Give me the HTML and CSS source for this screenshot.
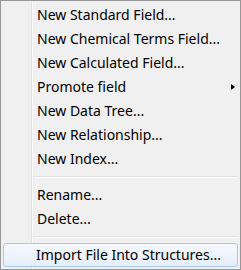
FILE: index.html
```html
<!DOCTYPE html>
<html>
<head>
<meta charset="utf-8">
<link rel="stylesheet" href="styles.css">
</head>
<body>
<div class="menu">
  <div class="item">New Standard Field...</div>
  <div class="item">New Chemical Terms Field...</div>
  <div class="item">New Calculated Field...</div>
  <div class="item has-sub">Promote field<span class="arrow"></span></div>
  <div class="item">New Data Tree...</div>
  <div class="item">New Relationship...</div>
  <div class="item">New Index...</div>
  <div class="sep"></div>
  <div class="item">Rename...</div>
  <div class="item">Delete...</div>
  <div class="sep"></div>
  <div class="item hover">Import File Into Structures...</div>
</div>
</body>
</html>
```
FILE: styles.css
```css
html, body {
  margin: 0;
  padding: 0;
  background: #f0f0f0;
}
.menu {
  box-sizing: border-box;
  width: 241px;
  height: 270px;
  border: 1px solid #979797;
  padding: 2px;
  background-color: #f0f0f0;
  background-image: linear-gradient(to right, transparent 30px, #e2e3e3 30px, #e2e3e3 31px, #ffffff 31px, #ffffff 32px, transparent 32px);
  font-family: "Noto Sans", "Open Sans", sans-serif;
  font-size: 14px;
  color: #000;
}
.item {
  box-sizing: border-box;
  height: 24px;
  line-height: 24px;
  padding-left: 33px;
  display: flex;
  align-items: center;
  white-space: nowrap;
  border: 1px solid transparent;
  border-radius: 3px;
}
.item.hover {
  padding-left: 32px;
  border-color: #a8c8ee;
  background: linear-gradient(to bottom, #f6f9fe, #e5eefb);
}
.has-sub {
  justify-content: space-between;
  padding-right: 2px;
}
.arrow {
  width: 0;
  height: 0;
  border-top: 3.5px solid transparent;
  border-bottom: 3.5px solid transparent;
  border-left: 4px solid #000;
}
.sep {
  height: 12px;
  margin-left: 30px;
  background: linear-gradient(to bottom, transparent 5px, #e0e0e0 5px, #e0e0e0 6px, #ffffff 6px, #ffffff 7px, transparent 7px);
}
```
